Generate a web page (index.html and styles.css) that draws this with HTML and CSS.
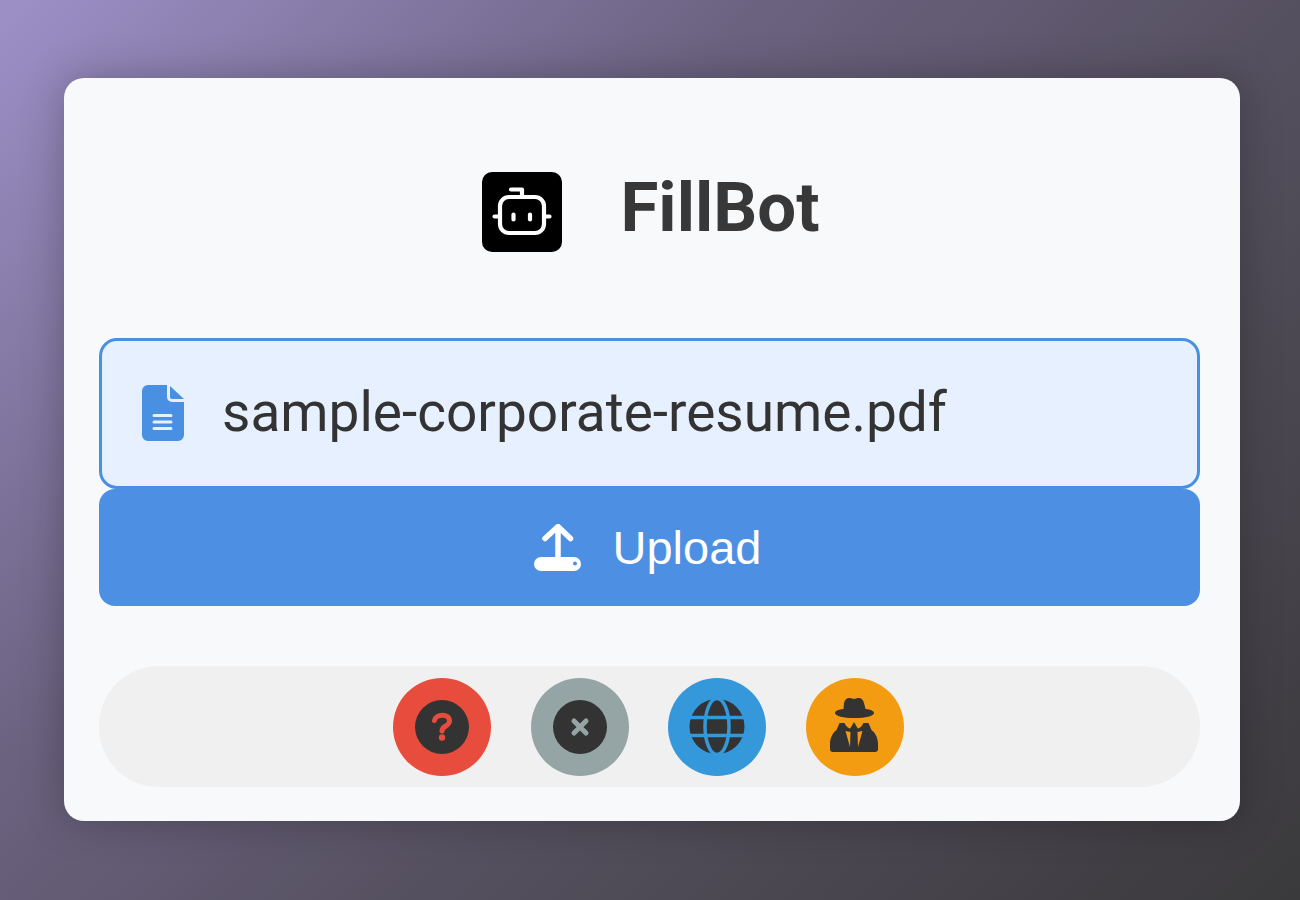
FILE: index.html
```html
<!DOCTYPE html>
<html lang="en">
<head>
  <meta charset="UTF-8">
  <title>FillBot</title>
  <link rel="stylesheet" href="styles.css">
</head>
<body>
  <div class="card">
    <div class="header">
      <div class="logo">
        <svg viewBox="0 0 80 80" width="80" height="80" fill="none" stroke="#fff" stroke-width="4.200" stroke-linecap="round" stroke-linejoin="round">
          <path d="M29 17.500h11v7"/>
          <rect x="18" y="25" width="44" height="36" rx="9"/>
          <path d="M12.500 44.500h5.500M62 44.500h5.500"/>
          <path d="M31.500 42.500v5M48 42.500v5"/>
        </svg>
      </div>
      <h1>FillBot</h1>
    </div>

    <div class="file-box">
      <svg class="file-icon" viewBox="0 0 42 56" width="42" height="56">
        <path fill="#4a90e2" d="M6 0h19v12a5 5 0 0 0 5 5h12v33a6 6 0 0 1-6 6H6a6 6 0 0 1-6-6V6a6 6 0 0 1 6-6z"/>
        <path fill="#4a90e2" d="M28 1l14 13H30a2 2 0 0 1-2-2z"/>
        <path stroke="#e6f0ff" stroke-width="3" stroke-linecap="round" d="M12 30.500h17M12 37h17M12 43.500h17"/>
      </svg>
      <span class="file-name">sample-corporate-resume.pdf</span>
    </div>

    <button class="upload-btn">
      <svg viewBox="0 0 48 48" width="48" height="48">
        <path d="M11 14.500L24 2.500 36.500 14.500M24 3v31" fill="none" stroke="#fff" stroke-width="5.500" stroke-linecap="round" stroke-linejoin="round"/>
        <rect x="0" y="33" width="47" height="14" rx="7" fill="#fff"/>
        <circle cx="41" cy="39.500" r="2" fill="#4d90e3"/>
      </svg>
      <span>Upload</span>
    </button>

    <div class="toolbar">
      <button class="tool tool-red">
        <svg viewBox="0 0 54 54" width="54" height="54">
          <circle cx="27" cy="27" r="27" fill="#333"/>
          <path d="M19.500 20.500c1-7 15-7.500 15 .5 0 5.500-7.500 4.500-7.500 10" fill="none" stroke="#e74c3c" stroke-width="5" stroke-linecap="round"/>
          <circle cx="27" cy="37.500" r="3.200" fill="#e74c3c"/>
        </svg>
      </button>
      <button class="tool tool-gray">
        <svg viewBox="0 0 54 54" width="54" height="54">
          <circle cx="27" cy="27" r="27" fill="#333"/>
          <path d="M21 21l12 12M33 21L21 33" stroke="#95a5a6" stroke-width="5" stroke-linecap="round"/>
        </svg>
      </button>
      <button class="tool tool-blue">
        <svg viewBox="0 0 56 56" width="56" height="56">
          <circle cx="28" cy="27.500" r="27.500" fill="#333"/>
          <ellipse cx="28" cy="27.500" rx="12" ry="28" fill="none" stroke="#3498db" stroke-width="3.500"/>
          <path d="M0 18.500h56M0 36.500h56" stroke="#3498db" stroke-width="3.500"/>
        </svg>
      </button>
      <button class="tool tool-orange">
        <svg viewBox="0 0 60 70" width="60" height="70">
          <path fill="#333" d="M19 11c1-4 3.500-5.500 6-5l4 1 4-1c2.500-.5 5 1 6 5l1.500 6c5 .5 8.500 1.800 8.500 4 0 3-8.500 5-19.500 5S10 24 10 21c0-2.200 3.500-3.500 8.500-4z"/>
          <path fill="#333" d="M14.500 31h29l3 7c4 3 6.500 8 6.500 14v5a3 3 0 0 1-3 3H8a3 3 0 0 1-3-3v-5c0-6 2.500-11 6.500-14z"/>
          <path fill="#f39c12" d="M19 27.500h20c0 4-2.500 8-6 9l-4-3-4 3c-3.500-1-6-5-6-9z"/>
          <path fill="#333" d="M29 30l3.500 6h-7z"/>
          <path fill="#f39c12" d="M20.500 39l5 1L25 55zM37.500 39l-5 1L33 55z"/>
        </svg>
      </button>
    </div>
  </div>
</body>
</html>
```

FILE: styles.css
```css
* {
  box-sizing: border-box;
}
body {
  margin: 0;
  height: 900px;
  overflow: hidden;
  padding: 78px 60px 0 64px;
  background: linear-gradient(135deg, #9d90c8 0%, #6b6280 35%, #55505f 60%, #3a393b 100%);
  font-family: Roboto, sans-serif;
}
.card {
  width: 1176px;
  height: 743px;
  padding: 94px 40px 0 35px;
  background-color: #f8f9fb;
  border-radius: 20px;
  box-shadow: 0 0 40px rgba(0, 0, 0, 0.25);
}
.header {
  height: 80px;
  display: flex;
  align-items: center;
  justify-content: center;
  gap: 59px;
  padding-left: 2px;
  margin-bottom: 86px;
}
.logo {
  width: 80px;
  height: 80px;
  background-color: #000;
  border-radius: 10px;
  display: flex;
}
h1 {
  margin: 0 0 8px;
  font-size: 69px;
  font-weight: 700;
  line-height: 80px;
  color: #383838;
}
.file-box {
  height: 151px;
  display: flex;
  align-items: center;
  gap: 38px;
  padding-left: 40px;
  border: 3px solid #4a90e2;
  border-radius: 18px;
  background-color: #e6f0ff;
}
.file-icon {
  margin-bottom: 2px;
}
.file-name {
  margin-bottom: 3px;
  font-size: 55px;
  color: #333;
}
.upload-btn {
  width: 100%;
  height: 117px;
  display: flex;
  align-items: center;
  justify-content: center;
  gap: 31px;
  padding: 0 4px 0 0;
  border: none;
  border-radius: 16px;
  background-color: #4d90e3;
  color: #fff;
  font-family: "Liberation Sans", sans-serif;
  font-size: 47px;
}
.toolbar {
  margin-top: 60px;
  height: 121px;
  display: flex;
  align-items: center;
  justify-content: center;
  gap: 39.500px;
  padding-right: 2px;
  background-color: #f0f0f0;
  border-radius: 60px;
}
.tool {
  width: 98px;
  height: 98px;
  padding: 0;
  border: none;
  border-radius: 50%;
  display: flex;
  align-items: center;
  justify-content: center;
}
.tool-red {
  background-color: #e74c3c;
}
.tool-gray {
  background-color: #95a5a6;
}
.tool-blue {
  background-color: #3498db;
}
.tool-orange {
  background-color: #f39c12;
}
```
